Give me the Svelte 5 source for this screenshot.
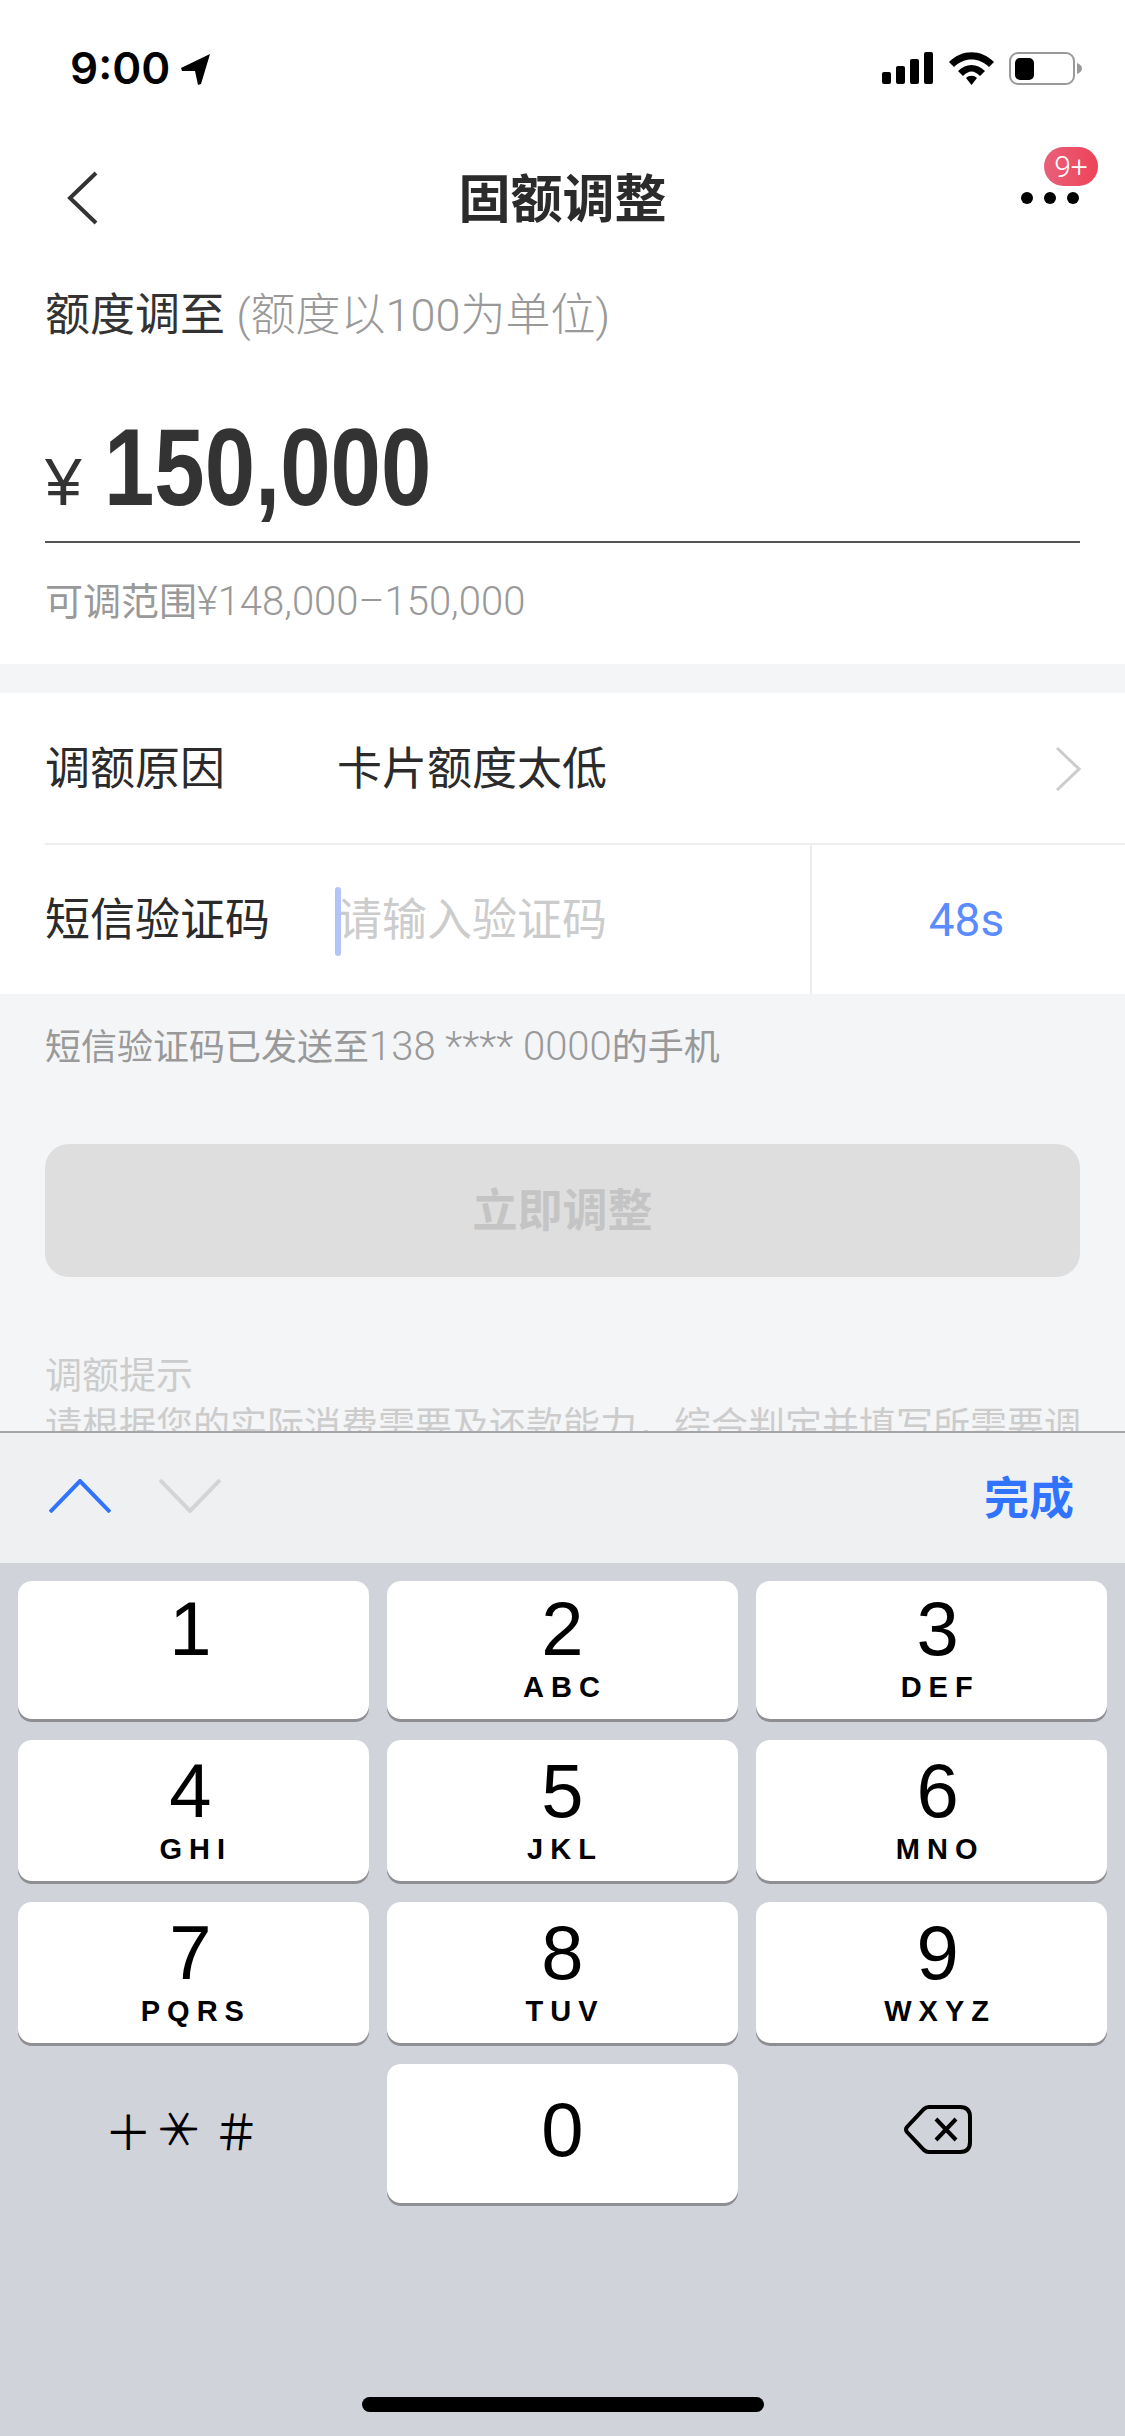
<script>
	const rows = [
		[
			{ d: '1', l: '' },
			{ d: '2', l: 'ABC' },
			{ d: '3', l: 'DEF' }
		],
		[
			{ d: '4', l: 'GHI' },
			{ d: '5', l: 'JKL' },
			{ d: '6', l: 'MNO' }
		],
		[
			{ d: '7', l: 'PQRS' },
			{ d: '8', l: 'TUV' },
			{ d: '9', l: 'WXYZ' }
		]
	];
</script>

<div class="phone">
	<div class="content">
		<div class="top">
			<header class="status">
				<div class="time">
					<span>9:00</span>
					<svg width="30" height="32" viewBox="0 0 30 32">
						<path d="M29 1 L0 15 L1 18 L14 18 L17 32 L20 31 Z" fill="#000" />
					</svg>
				</div>
				<div class="status-icons">
					<svg width="51" height="32" viewBox="0 0 51 32">
						<rect x="0" y="20" width="9" height="12" rx="2" />
						<rect x="14" y="14" width="9" height="18" rx="2" />
						<rect x="28" y="7" width="9" height="25" rx="2" />
						<rect x="42" y="0" width="9" height="32" rx="2" />
					</svg>
					<svg width="45" height="33" viewBox="0 0 45 33">
						<path d="M0 10 C13 -3 32 -3 45 10 L40 15 C30 5 15 5 5 15 Z" />
						<path d="M9 19 C17 11 28 11 36 19 L31 24 C25 18 20 18 14 24 Z" />
						<path d="M17 26 C20 23 25 23 28 26 L22.5 33 Z" />
					</svg>
					<svg width="73" height="33" viewBox="0 0 73 33">
						<rect x="1" y="1" width="64" height="31" rx="8" fill="none" stroke="#999" stroke-width="2" />
						<rect x="6" y="6" width="19" height="22" rx="5" />
						<path d="M68 11 C71 12 73 14 73 16.500 C73 19 71 21 68 22 Z" fill="#999" />
					</svg>
				</div>
			</header>

			<nav class="nav">
				<svg class="back" width="31" height="54" viewBox="0 0 31 54">
					<path d="M29 2 L3 27 L29 52" fill="none" stroke="#333" stroke-width="4" />
				</svg>
				<h1>固额调整</h1>
				<div class="more">
					<i></i><i></i><i></i>
					<span class="badge">9+</span>
				</div>
			</nav>

			<div class="amount-box">
				<p class="amount-label">额度调至 <span>(额度以100为单位)</span></p>
				<div class="amount">
					<span class="yen">¥</span>
					<span class="value">150,000</span>
				</div>
				<p class="range">可调范围<span class="num">¥148,000–150,000</span></p>
			</div>
		</div>

		<section class="form">
			<div class="row">
				<span class="row-label">调额原因</span>
				<span class="row-value">卡片额度太低</span>
				<svg class="arrow" width="26" height="44" viewBox="0 0 26 44">
					<path d="M2 1 L24 22 L2 43" fill="none" stroke="#ccc" stroke-width="3" />
				</svg>
			</div>
			<div class="row sms">
				<span class="row-label">短信验证码</span>
				<span class="row-value placeholder">请输入验证码<b class="caret"></b></span>
				<span class="count">48s</span>
			</div>
		</section>

		<p class="hint">短信验证码已发送至<span class="num">138 **** 0000</span>的手机</p>
		<button class="submit">立即调整</button>

		<div class="tips">
			<p>调额提示</p>
			<p>请根据您的实际消费需要及还款能力，综合判定并填写所需要调整的额度</p>
		</div>
	</div>

	<div class="toolbar">
		<svg width="62" height="34" viewBox="0 0 62 34">
			<path d="M1 33 L31 2 L61 33" fill="none" stroke="#2f73ff" stroke-width="4" />
		</svg>
		<svg class="down" width="62" height="34" viewBox="0 0 62 34">
			<path d="M1 1 L31 32 L61 1" fill="none" stroke="#d4d4d6" stroke-width="4" />
		</svg>
		<span class="done">完成</span>
	</div>

	<div class="keyboard">
		{#each rows as row}
			{#each row as key}
				<div class="key">
					<span class="digit">{key.d}</span>
					<span class="letters">{key.l}</span>
				</div>
			{/each}
		{/each}
		<div class="key plain symbols"><span>＋</span><span class="star">＊</span><span>＃</span></div>
		<div class="key zero"><span class="digit">0</span></div>
		<div class="key plain backspace">
			<svg width="68" height="49" viewBox="0 0 68 49">
				<path d="M25 2 H56 Q66 2 66 12 V37 Q66 47 56 47 H25 Q22 47 20 45 L3 27 Q1 24.500 3 22 L20 4 Q22 2 25 2 Z" fill="none" stroke="#000" stroke-width="4" />
				<path d="M32 14 L52 35 M52 14 L32 35" fill="none" stroke="#000" stroke-width="4" />
			</svg>
		</div>
		<div class="home"></div>
	</div>
</div>

<style>
	:global(body) {
		margin: 0;
		background: #f4f5f7;
	}

	.phone {
		width: 1125px;
		height: 2436px;
		overflow: hidden;
		display: flex;
		flex-direction: column;
		font-family: Roboto, 'Noto Sans CJK SC', sans-serif;
		color: #333;
	}

	p,
	h1 {
		margin: 0;
		font-weight: 400;
	}

	.content {
		height: 1431px;
		flex: none;
		overflow: hidden;
		background: #f4f5f7;
	}

	.top {
		background: #fff;
		height: 664px;
	}

	.status {
		height: 132px;
		box-sizing: border-box;
		padding: 52px 43px 0 70px;
		display: flex;
		justify-content: space-between;
		align-items: flex-start;
	}

	.time {
		display: flex;
		align-items: center;
		gap: 11px;
		font-family: Inter, sans-serif;
		font-weight: 600;
		font-size: 44px;
		line-height: 33px;
		color: #000;
	}

	.status-icons {
		display: flex;
		gap: 15.500px;
	}

	.nav {
		height: 132px;
		box-sizing: border-box;
		padding-bottom: 6px;
		position: relative;
		display: flex;
		align-items: center;
		justify-content: center;
	}

	.back {
		position: absolute;
		left: 67px;
		top: 39px;
	}

	h1 {
		font-size: 52px;
		font-weight: 700;
		color: #2b2b2b;
	}

	.more {
		position: absolute;
		left: 1021px;
		top: 60px;
		display: flex;
		gap: 11px;
	}

	.more i {
		width: 12px;
		height: 12px;
		border-radius: 50%;
		background: #000;
	}

	.badge {
		position: absolute;
		left: 23px;
		top: -45px;
		width: 54px;
		height: 39px;
		border-radius: 20px;
		background: linear-gradient(90deg, #e9607a, #ee4358);
		color: #fff;
		font-size: 30px;
		font-weight: 300;
		line-height: 39px;
		text-align: center;
	}

	.amount-box {
		padding: 22px 45px 0;
	}

	.amount-label {
		font-size: 45px;
		line-height: 60px;
		color: #333;
	}

	.amount-label span {
		color: #999;
		font-weight: 300;
	}

	.amount {
		height: 197px;
		box-sizing: border-box;
		padding-top: 71px;
		display: flex;
		align-items: baseline;
		gap: 22px;
		border-bottom: 2px solid #555;
		line-height: 100px;
		color: #333;
		font-family: 'Liberation Sans', sans-serif;
	}

	.yen {
		font-size: 66px;
	}

	.value {
		display: inline-block;
		font-size: 110px;
		font-weight: 700;
		transform: scaleX(0.823);
		transform-origin: left center;
	}

	.range {
		margin-top: 35px;
		font-size: 38px;
		line-height: 48px;
		color: #999;
	}

	.num {
		font-size: 40px;
		font-weight: 300;
	}

	.form {
		margin-top: 29px;
		background: #fff;
	}

	.row {
		height: 150px;
		box-sizing: border-box;
		padding-bottom: 5px;
		margin-left: 45px;
		display: flex;
		align-items: center;
		position: relative;
		font-size: 45px;
		color: #2b2b2b;
	}

	.row-label {
		width: 292px;
	}

	.arrow {
		position: absolute;
		left: 1010px;
		top: 54px;
	}

	.sms {
		height: 151px;
		padding-bottom: 7px;
		border-top: 2px solid #eee;
	}

	.placeholder {
		color: #ccc;
		position: relative;
	}

	.caret {
		position: absolute;
		left: -2px;
		top: 3px;
		width: 6px;
		height: 69px;
		border-radius: 3px;
		background: #b3c4fa;
	}

	.count {
		position: absolute;
		left: 765px;
		top: 0;
		width: 315px;
		height: 100%;
		box-sizing: border-box;
		padding-right: 4px;
		border-left: 2px solid #eee;
		display: flex;
		align-items: center;
		justify-content: center;
		color: #5b8cff;
		font-size: 46px;
	}

	.hint {
		margin: 29px 45px 0;
		font-size: 36px;
		line-height: 48px;
		color: #999;
	}

	.submit {
		display: block;
		width: 1035px;
		height: 133px;
		margin: 72px 45px 0;
		padding: 0 0 6px;
		border: 0;
		border-radius: 24px;
		background: #dedede;
		color: #c4c4c4;
		font: 700 45px 'Noto Sans CJK SC', sans-serif;
	}

	.tips {
		margin: 75px 45px 0;
		font-size: 37px;
		line-height: 50px;
		color: #ccc;
		white-space: nowrap;
		overflow: hidden;
	}

	.toolbar {
		height: 132px;
		flex: none;
		box-sizing: border-box;
		padding: 0 51px 5px 49px;
		border-top: 2px solid #a5a5a8;
		background: #eff0f2;
		display: flex;
		align-items: center;
		gap: 48px;
	}

	.done {
		margin-left: auto;
		color: #2f73ff;
		font-size: 45px;
		font-weight: 700;
	}

	.keyboard {
		flex: 1;
		background: #d1d3da;
		box-sizing: border-box;
		padding: 18px 18px 0;
		display: grid;
		grid-template-columns: repeat(3, 350.670px);
		grid-template-rows: 138px 141px 141px 139px;
		column-gap: 18.500px;
		row-gap: 21px;
		align-content: start;
		position: relative;
	}

	.key {
		background: #fff;
		border-radius: 14px;
		box-shadow: 0 3px 0 #8e8e93;
		display: flex;
		flex-direction: column;
		align-items: center;
		color: #000;
		font-family: 'Liberation Sans', sans-serif;
	}

	.key:nth-child(3n) {
		padding-left: 12px;
	}

	.key:nth-child(3n + 1) .digit {
		position: relative;
		left: -3px;
	}

	.digit {
		font-size: 76px;
		line-height: 76px;
		margin-top: 13px;
	}

	.key:nth-child(-n + 3) .digit {
		margin-top: 10px;
	}

	.letters {
		font-weight: 700;
		font-size: 29px;
		line-height: 29px;
		letter-spacing: 7px;
		margin-top: 6px;
		margin-left: 5px;
	}

	.zero {
		justify-content: center;
		padding-bottom: 7px;
	}

	.zero .digit {
		margin-top: 0;
	}

	.plain {
		background: none;
		box-shadow: none;
		justify-content: center;
	}

	.symbols {
		flex-direction: row;
		gap: 6px;
		padding-right: 22px;
		padding-bottom: 10px;
		font-family: 'Noto Sans CJK SC', sans-serif;
		font-size: 48px;
		line-height: 48px;
	}

	.star {
		display: inline-block;
		transform: rotate(90deg);
	}

	.backspace {
		padding-left: 15px;
		padding-bottom: 8px;
		box-sizing: border-box;
	}

	.home {
		position: absolute;
		left: 362px;
		top: 834px;
		width: 402px;
		height: 15px;
		border-radius: 8px;
		background: #000;
	}
</style>
